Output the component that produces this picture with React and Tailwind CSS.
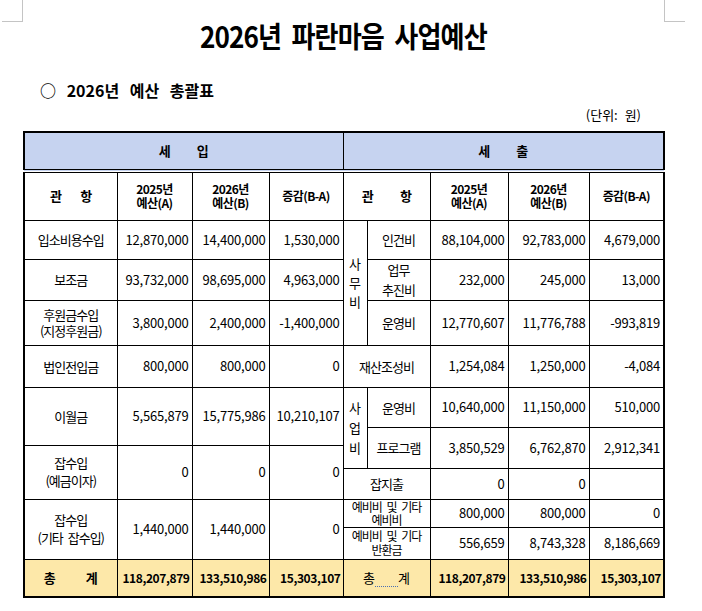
import React from 'react';

const cell = 'border border-black p-0 align-middle';
const numCls = cell + ' text-right pr-[3px] text-[13px] tracking-[-0.2px] whitespace-nowrap';
const lblCls = cell + ' text-center text-[13px] tracking-[-1px] [word-spacing:3px] leading-[15px]';
const smallLbl = cell + ' text-center text-[12px] tracking-[-1px] [word-spacing:3px] leading-[13px]';
const headCls = cell + ' text-center text-[12px] font-bold tracking-[-0.6px] leading-[14px]';
const totCls = cell + ' bg-[#fde8a9] font-bold text-[12px] text-right pr-[2px] tracking-[-0.4px] whitespace-nowrap';

const widths = ['w-[93px]', 'w-[75px]', 'w-[77px]', 'w-[74px]', 'w-[24px]', 'w-[63px]', 'w-[78px]', 'w-[81px]', 'w-[75px]'];

const Spread = ({ a, b, gap }) => (
  <div className={'flex justify-center ' + gap}>
    <span>{a}</span>
    <span>{b}</span>
  </div>
);

const BudgetTable = () => (
  <table className="table-fixed border-collapse border-2 border-black ml-[23px] w-[642px] text-black">
    <colgroup>
      {widths.map((w, i) => (
        <col key={i} className={w} />
      ))}
    </colgroup>
    <tbody>
      <tr className="h-[39px]">
        <td colSpan={4} className={cell + ' bg-[#c6d3f0] border-b-[4px] border-double text-[13px] font-bold'}>
          <Spread a="세" b="입" gap="gap-[26px]" />
        </td>
        <td colSpan={5} className={cell + ' bg-[#c6d3f0] border-b-[4px] border-double text-[13px] font-bold'}>
          <Spread a="세" b="출" gap="gap-[26px]" />
        </td>
      </tr>
      <tr className="h-[49px]">
        <td className={headCls + ' text-[13px]'}>
          <Spread a="관" b="항" gap="gap-[19px]" />
        </td>
        <td className={headCls}>2025년<br />예산(A)</td>
        <td className={headCls}>2026년<br />예산(B)</td>
        <td className={headCls}>증감(B-A)</td>
        <td colSpan={2} className={headCls + ' text-[13px]'}>
          <Spread a="관" b="항" gap="gap-[27px]" />
        </td>
        <td className={headCls}>2025년<br />예산(A)</td>
        <td className={headCls}>2026년<br />예산(B)</td>
        <td className={headCls}>증감(B-A)</td>
      </tr>

      <tr className="h-[39px]">
        <td className={lblCls}>입소비용수입</td>
        <td className={numCls}>12,870,000</td>
        <td className={numCls}>14,400,000</td>
        <td className={numCls}>1,530,000</td>
        <td rowSpan={3} className={cell + ' text-center text-[13px] leading-[19px]'}>사<br />무<br />비</td>
        <td className={lblCls}>인건비</td>
        <td className={numCls}>88,104,000</td>
        <td className={numCls}>92,783,000</td>
        <td className={numCls + ' pr-[2px]'}>4,679,000</td>
      </tr>
      <tr className="h-[41px]">
        <td className={lblCls}>보조금</td>
        <td className={numCls}>93,732,000</td>
        <td className={numCls}>98,695,000</td>
        <td className={numCls}>4,963,000</td>
        <td className={lblCls + ' leading-[20px]'}>업무<br />추진비</td>
        <td className={numCls}>232,000</td>
        <td className={numCls}>245,000</td>
        <td className={numCls + ' pr-[2px]'}>13,000</td>
      </tr>
      <tr className="h-[45px]">
        <td className={lblCls + ' leading-[16px]'}>후원금수입<br />(지정후원금)</td>
        <td className={numCls}>3,800,000</td>
        <td className={numCls}>2,400,000</td>
        <td className={numCls}>-1,400,000</td>
        <td className={lblCls}>운영비</td>
        <td className={numCls}>12,770,607</td>
        <td className={numCls}>11,776,788</td>
        <td className={numCls + ' pr-[2px]'}>-993,819</td>
      </tr>
      <tr className="h-[42px]">
        <td className={lblCls}>법인전입금</td>
        <td className={numCls}>800,000</td>
        <td className={numCls}>800,000</td>
        <td className={numCls}>0</td>
        <td colSpan={2} className={lblCls}>재산조성비</td>
        <td className={numCls}>1,254,084</td>
        <td className={numCls}>1,250,000</td>
        <td className={numCls + ' pr-[2px]'}>-4,084</td>
      </tr>

      <tr className="h-[40px]">
        <td rowSpan={2} className={lblCls}>이월금</td>
        <td rowSpan={2} className={numCls}>5,565,879</td>
        <td rowSpan={2} className={numCls}>15,775,986</td>
        <td rowSpan={2} className={numCls}>10,210,107</td>
        <td rowSpan={3} className={cell + ' text-center text-[13px] leading-[20px]'}>사<br />업<br />비</td>
        <td className={lblCls}>운영비</td>
        <td className={numCls}>10,640,000</td>
        <td className={numCls}>11,150,000</td>
        <td className={numCls + ' pr-[2px]'}>510,000</td>
      </tr>
      <tr className="h-[18px]">
        <td rowSpan={2} className={lblCls}>프로그램</td>
        <td rowSpan={2} className={numCls}>3,850,529</td>
        <td rowSpan={2} className={numCls}>6,762,870</td>
        <td rowSpan={2} className={numCls + ' pr-[2px]'}>2,912,341</td>
      </tr>
      <tr className="h-[23px]">
        <td rowSpan={2} className={lblCls + ' leading-[18px]'}>잡수입<br />(예금이자)</td>
        <td rowSpan={2} className={numCls}>0</td>
        <td rowSpan={2} className={numCls}>0</td>
        <td rowSpan={2} className={numCls}>0</td>
      </tr>
      <tr className="h-[31px]">
        <td colSpan={2} className={lblCls}>잡지출</td>
        <td className={numCls}>0</td>
        <td className={numCls}>0</td>
        <td className={numCls}></td>
      </tr>
      <tr className="h-[28px]">
        <td rowSpan={2} className={lblCls + ' leading-[18px]'}>잡수입<br />(기타 잡수입)</td>
        <td rowSpan={2} className={numCls}>1,440,000</td>
        <td rowSpan={2} className={numCls}>1,440,000</td>
        <td rowSpan={2} className={numCls}>0</td>
        <td colSpan={2} className={smallLbl}>예비비 및 기타<br />예비비</td>
        <td className={numCls}>800,000</td>
        <td className={numCls}>800,000</td>
        <td className={numCls + ' pr-[2px]'}>0</td>
      </tr>
      <tr className="h-[32px]">
        <td colSpan={2} className={smallLbl + ' leading-[14px]'}>예비비 및 기다<br />반환금</td>
        <td className={numCls}>556,659</td>
        <td className={numCls}>8,743,328</td>
        <td className={numCls + ' pr-[2px]'}>8,186,669</td>
      </tr>

      <tr className="h-[38px]">
        <td className={cell + ' bg-[#fde8a9] font-bold text-[13px]'}>
          <Spread a="총" b="계" gap="gap-[30px]" />
        </td>
        <td className={totCls}>118,207,879</td>
        <td className={totCls}>133,510,986</td>
        <td className={totCls}>15,303,107</td>
        <td colSpan={2} className={cell + ' bg-[#fde8a9] text-[13px]'}>
          <div className="flex justify-center items-center">
            <span>총</span>
            <span className="w-[23px] h-[9px] mt-[10px] border-b border-dotted border-[#4a6fb3]" />
            <span>계</span>
          </div>
        </td>
        <td className={totCls}>118,207,879</td>
        <td className={totCls}>133,510,986</td>
        <td className={totCls}>15,303,107</td>
      </tr>
    </tbody>
  </table>
);

export default function App() {
  return (
    <div className="w-[702px] h-[611px] bg-white overflow-hidden font-['Noto_Sans_CJK_KR',sans-serif] text-black">
      <div className="flex items-start h-[58px]">
        <div className="ml-[2px] w-[21px] h-[22px] border-r border-b border-[#c4c4c4] shrink-0" />
        <div className="flex-1 flex justify-center pt-[18px]">
          <h1 className="inline-block text-[29px] leading-[34px] font-bold tracking-[-1px] scale-x-[0.9] [word-spacing:6px] whitespace-nowrap">
            2026년 파란마음 사업예산
          </h1>
        </div>
        <div className="mr-[17px] w-[21px] h-[22px] border-l border-b border-[#c4c4c4] shrink-0" />
      </div>
      <div className="mt-[21px] pl-[40px] text-[16px] leading-[22px] font-bold [word-spacing:7px] tracking-[0px]">
        ○ 2026년 예산 총괄표
      </div>
      <div className="mt-[5px] pr-[61px] text-right text-[13px] leading-[18px] [word-spacing:4px]">
        (단위: 원)
      </div>
      <div className="mt-[7px]">
        <BudgetTable />
      </div>
    </div>
  );
}
